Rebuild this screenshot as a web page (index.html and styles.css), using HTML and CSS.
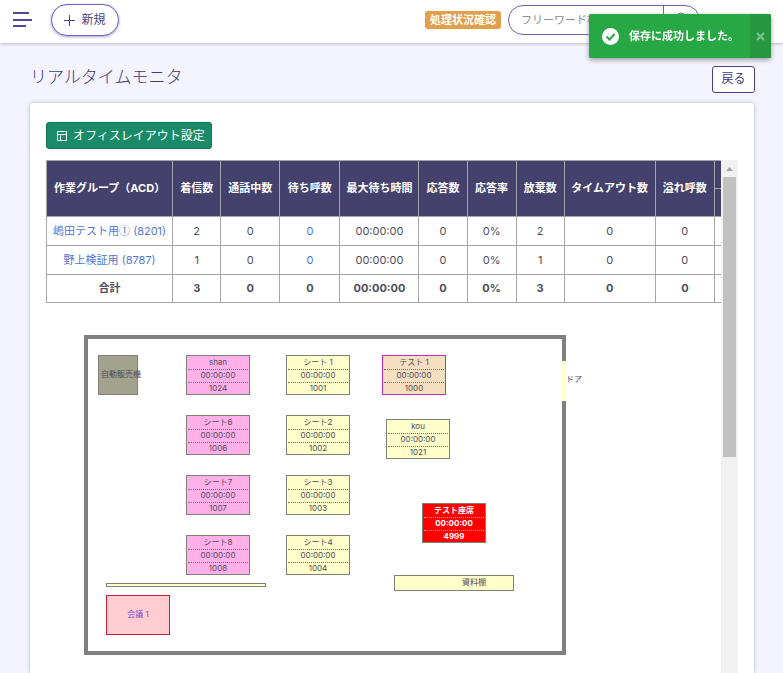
FILE: index.html
```html
<!DOCTYPE html>
<html lang="ja">
<head>
<meta charset="utf-8">
<meta name="viewport" content="width=device-width, initial-scale=1">
<title>リアルタイムモニタ</title>
<link rel="stylesheet" href="styles.css">
</head>
<body>
<header class="topbar">
  <button class="menu" type="button" aria-label="メニュー"><svg width="20" height="16" viewBox="0 0 20 16"><path d="M0 1h16M0 8h19M0 14h13" stroke="#4f4792" stroke-width="2" fill="none"/></svg></button>
  <button class="new" type="button"><svg width="11" height="11" viewBox="0 0 11 11"><path d="M5.500 0v11M0 5.500h11" stroke="currentColor" fill="none"/></svg>新規</button>
  <a class="status" href="#status">処理状況確認</a>
  <form class="search">
    <input type="search" placeholder="フリーワード検索" aria-label="フリーワード検索">
    <button type="button" aria-label="検索"><svg width="12" height="12" viewBox="0 0 12 12"><circle cx="5" cy="5" r="4" stroke="#6a649c" fill="none"/><path d="M8 8l3 3" stroke="#6a649c"/></svg></button>
  </form>
</header>

<main class="page">
  <div class="heading">
    <h1>リアルタイムモニタ</h1>
    <button class="back" type="button">戻る</button>
  </div>
  <section class="card">
    <button class="layout-button" type="button"><svg width="10" height="10" viewBox="0 0 10 10"><path d="M.5.5h9v9h-9zM.5 3.5h9M3.5 3.5v6" stroke="currentColor" fill="none"/></svg>オフィスレイアウト設定</button>
    <div class="monitor">
      <div class="view">
        <table>
          <colgroup><col class="w-name"><col class="w-s"><col class="w-m"><col class="w-wait"><col class="w-time"><col class="w-s"><col class="w-rate"><col class="w-s"><col class="w-l"><col class="w-m"><col class="w-m"></colgroup>
          <thead>
            <tr><th rowspan="2">作業グループ（ACD）</th><th rowspan="2">着信数</th><th rowspan="2">通話中数</th><th rowspan="2">待ち呼数</th><th rowspan="2">最大待ち時間</th><th rowspan="2">応答数</th><th rowspan="2">応答率</th><th rowspan="2">放棄数</th><th rowspan="2">タイムアウト数</th><th rowspan="2">溢れ呼数</th><th></th></tr>
            <tr><th></th></tr>
          </thead>
          <tbody>
            <tr><td><a href="#8201">嶋田テスト用<span class="kanji">①</span> (8201)</a></td><td>2</td><td>0</td><td><a href="#w1">0</a></td><td>00:00:00</td><td>0</td><td>0%</td><td>2</td><td>0</td><td>0</td><td></td></tr>
            <tr><td><a href="#8787">野上検証用 (8787)</a></td><td>1</td><td>0</td><td><a href="#w2">0</a></td><td>00:00:00</td><td>0</td><td>0%</td><td>1</td><td>0</td><td>0</td><td></td></tr>
          </tbody>
          <tfoot>
            <tr><td>合計</td><td>3</td><td>0</td><td>0</td><td>00:00:00</td><td>0</td><td>0%</td><td>3</td><td>0</td><td>0</td><td></td></tr>
          </tfoot>
        </table>

        <div class="office">
          <div class="item vending">自動販売機</div>
          <div class="item seat pink c1 r1"><span>shan</span><span>00:00:00</span><span>1024</span></div>
          <div class="item seat pink c1 r2"><span>シート6</span><span>00:00:00</span><span>1006</span></div>
          <div class="item seat pink c1 r3"><span>シート7</span><span>00:00:00</span><span>1007</span></div>
          <div class="item seat pink c1 r4"><span>シート8</span><span>00:00:00</span><span>1008</span></div>
          <div class="item seat c2 r1"><span>シート 1</span><span>00:00:00</span><span>1001</span></div>
          <div class="item seat c2 r2"><span>シート2</span><span>00:00:00</span><span>1002</span></div>
          <div class="item seat c2 r3"><span>シート3</span><span>00:00:00</span><span>1003</span></div>
          <div class="item seat c2 r4"><span>シート4</span><span>00:00:00</span><span>1004</span></div>
          <div class="item seat test"><span>テスト 1</span><span>00:00:00</span><span>1000</span></div>
          <div class="item seat kou"><span>kou</span><span>00:00:00</span><span>1021</span></div>
          <div class="item seat alert"><span>テスト座席</span><span>00:00:00</span><span>4999</span></div>
          <div class="item shelf">資料棚</div>
          <div class="item partition"></div>
          <div class="item meeting">会議 1</div>
          <div class="item door">ドア</div>
        </div>
      </div>
      <div class="track" aria-hidden="true"><svg width="13" height="17" viewBox="0 0 13 17"><path d="M3 11l3.500-4 3.500 4z" fill="#a3a3a3"/></svg><div class="thumb"></div></div>
    </div>
  </section>
</main>

<div class="toast" role="status">
  <svg width="17" height="17" viewBox="0 0 17 17"><circle cx="8.500" cy="8.500" r="8.500" fill="#fff"/><path d="M4.500 8.500l3 3 5-5.500" stroke="#28a745" stroke-width="2" fill="none"/></svg>
  <p>保存に成功しました。</p>
  <button type="button" aria-label="閉じる"><svg width="9" height="9" viewBox="0 0 9 9"><path d="M1 1l7 7M8 1L1 8" stroke="#7cc68c" stroke-width="2"/></svg></button>
</div>
</body>
</html>
```
FILE: styles.css
```css
* { box-sizing: border-box; }
body {
  margin: 0;
  height: 100vh;
  overflow: hidden;
  display: flex;
  flex-direction: column;
  background: #f3f4fd;
  color: #4d4d5c;
  font: 11px/16px Inter, "Noto Sans CJK JP", sans-serif;
}
button, input { font: inherit; }
button { cursor: pointer; }
a { color: #5276d4; text-decoration: none; }

.topbar {
  flex: none;
  display: flex;
  align-items: center;
  height: 43px;
  padding: 0 83px 3px 13px;
  background: #fff;
  box-shadow: 0 1px 3px #b9bac4;
}
.menu { display: flex; padding: 0; margin-right: 18px; border: 0; background: none; }
.new {
  display: flex;
  align-items: center;
  justify-content: center;
  gap: 6px;
  width: 68px;
  height: 32px;
  border: 1px solid #6f63b5;
  border-radius: 16px;
  background: #fff;
  color: #4a4484;
  font-size: 12px;
  box-shadow: 0 1px 3px #a9a2dc;
}
.status {
  margin-left: auto;
  margin-right: 7px;
  padding: 1px 5px;
  border-radius: 3px;
  background: #e2a04c;
  color: #fff;
  font-weight: 700;
}
.search {
  display: flex;
  height: 30px;
  width: 192px;
  border: 1px solid #6a649c;
  border-radius: 15px;
  overflow: hidden;
}
.search input { flex: 1; min-width: 0; padding: 0 12px; border: 0; background: none; }
.search input::placeholder { color: #8b8b98; }
.search button { width: 36px; padding: 0; border: 0; border-left: 1px solid #6a649c; background: none; }

.page {
  flex: 1;
  min-height: 0;
  display: flex;
  flex-direction: column;
  padding: 22px 29px 0 30px;
}
.heading { display: flex; justify-content: space-between; align-items: center; margin-bottom: 10px; }
h1 { margin: 0; color: #3d3a78; font-size: 17px; line-height: 24px; font-weight: 300; padding-bottom: 4px; }
.back {
  width: 43px;
  height: 27px;
  margin-right: -1px;
  padding: 0;
  border: 1px solid #4a4484;
  border-radius: 3px;
  background: #fff;
  color: #3d3a78;
  font-size: 12px;
}
.card {
  flex: 1;
  min-height: 0;
  display: flex;
  flex-direction: column;
  align-items: flex-start;
  gap: 11px;
  padding: 19px 16px 0;
  border-radius: 3px 3px 0 0;
  background: #fff;
  box-shadow: 0 0 4px #b5b6c6;
}
.layout-button {
  flex: none;
  display: flex;
  align-items: center;
  gap: 6px;
  height: 27px;
  padding: 0 6px 0 10px;
  border: 1px solid #127354;
  border-radius: 3px;
  background: #198b69;
  color: #fff;
  font-size: 12px;
}

.monitor { flex: 1; min-height: 0; width: 100%; display: flex; }
.view { flex: 1; min-width: 0; overflow: hidden; }
.track { flex: none; width: 17px; padding: 0 2px; background: #f1f1f1; }
.track svg { display: block; }
.thumb { height: 280px; background: #c1c1c1; }

table { width: 728px; table-layout: fixed; border-collapse: collapse; text-align: center; }
.w-name { width: 126px; }
.w-s { width: 48px; }
.w-rate { width: 49px; }
.w-m { width: 59px; }
.w-wait { width: 60px; }
.w-time { width: 79px; }
.w-l { width: 91px; }
th, td { padding: 0; border: 1px solid #a5a6ab; white-space: nowrap; }
th { height: 28px; padding-bottom: 2px; background: #44416d; color: #fff; font-weight: 700; }
td { height: 29px; padding-bottom: 1px; }
tfoot { font-weight: 700; }
tfoot td { height: 28px; }
.kanji { font-family: "Noto Sans CJK JP", sans-serif; line-height: 1; }

.office {
  position: relative;
  width: 482px;
  height: 320px;
  margin: 32px 0 0 38px;
  border: 4px solid #808080;
  font-size: 8px;
  line-height: 11px;
}
.item {
  position: absolute;
  border: 1px solid #808076;
  background: #ffffcb;
  text-align: center;
  white-space: nowrap;
}
.seat { width: 64px; height: 40px; padding: 0 1px; }
.seat span { display: block; padding-bottom: 1px; border-bottom: 1px dotted #73736a; }
.seat span:first-child { padding-top: 1px; }
.seat span:last-child { border-bottom: 0; }
.c1 { left: 98px; }
.c2 { left: 198px; }
.r1 { top: 16px; }
.r2 { top: 76px; }
.r3 { top: 136px; }
.r4 { top: 196px; }
.pink { background: #ffb0e8; }
.test { left: 294px; top: 16px; border-color: #c02fc4; background: #f5dfc0; }
.kou { left: 298px; top: 80px; }
.alert { left: 334px; top: 164px; background: #f00; color: #fff; font-weight: 700; }
.alert span { border-color: #ffb3b3; }
.vending { left: 10px; top: 16px; width: 40px; height: 40px; padding-left: 2px; background: #a3a38d; line-height: 36px; }
.shelf { left: 306px; top: 236px; width: 120px; height: 16px; padding-left: 40px; line-height: 13px; }
.partition { left: 18px; top: 244px; width: 160px; height: 4px; }
.meeting { left: 18px; top: 256px; width: 64px; height: 40px; border-color: #c5213c; background: #ffccd1; color: #7950c8; line-height: 36px; }
.door { left: 474px; top: 22px; width: 4px; height: 40px; padding-left: 4px; border: 0; line-height: 36px; }

.toast {
  position: fixed;
  top: 14px;
  right: 12px;
  display: flex;
  align-items: center;
  height: 44px;
  padding-left: 13px;
  border-radius: 2px;
  background: #28a745;
  color: #fff;
  font-weight: 700;
  box-shadow: 0 2px 5px #9a9aa5;
}
.toast p { margin: 0 11px 0 10px; }
.toast button {
  display: grid;
  place-items: center;
  align-self: stretch;
  width: 21px;
  padding: 0;
  border: 0;
  border-radius: 0 2px 2px 0;
  background: #26963f;
}
```
